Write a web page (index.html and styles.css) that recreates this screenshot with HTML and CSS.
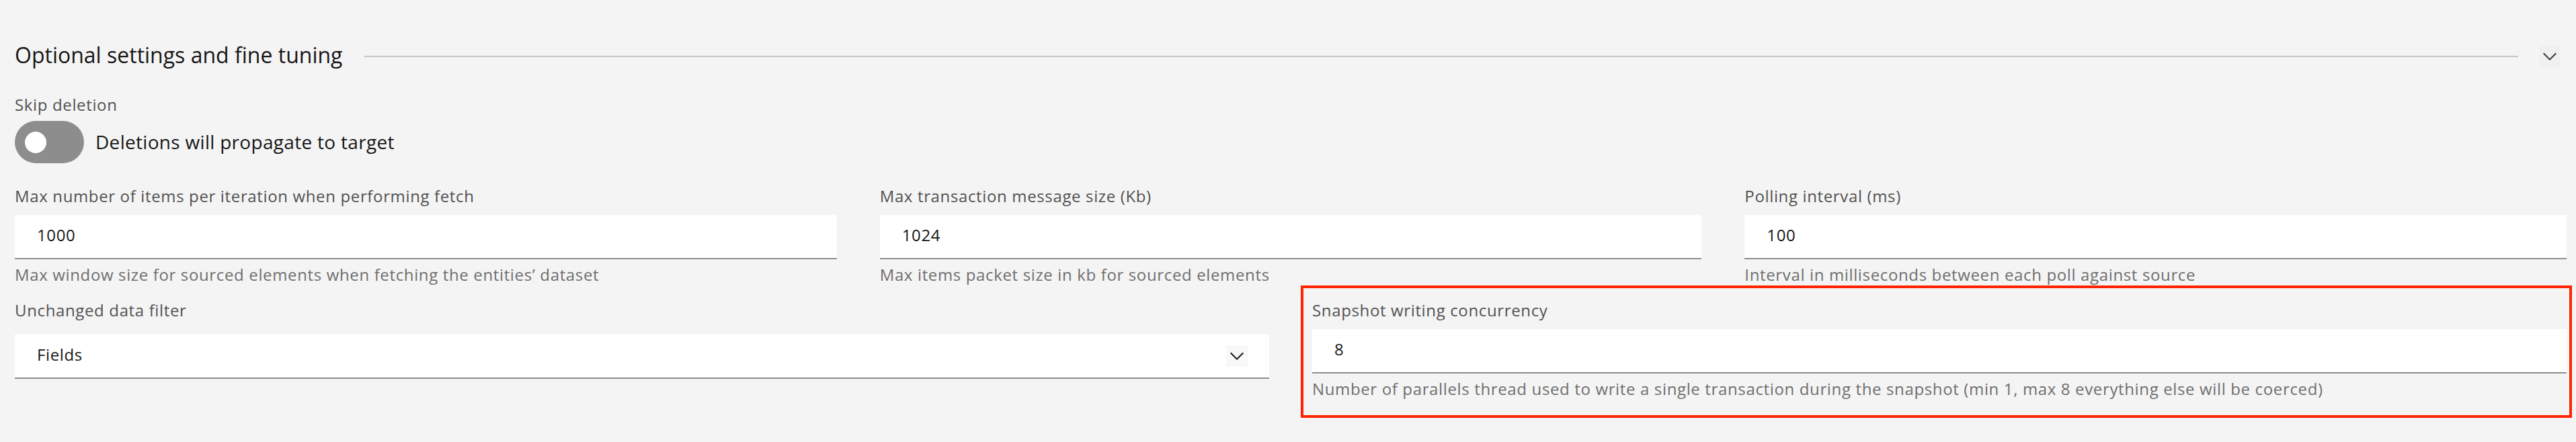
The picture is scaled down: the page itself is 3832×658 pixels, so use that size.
FILE: index.html
```html
<!DOCTYPE html>
<html lang="en">
<head>
<meta charset="utf-8">
<title>Optional settings and fine tuning</title>
<link rel="stylesheet" href="styles.css">
</head>
<body>
<div class="page">
  <div class="section-header">
    <h2 class="section-title">Optional settings and fine tuning</h2>
    <div class="section-rule"></div>
    <button class="icon-btn icon-btn--header" aria-label="Collapse">
      <svg viewBox="0 0 16 16" width="32" height="32"><path d="M8 11L3 6 3.7 5.3 8 9.6 12.3 5.3 13 6z"/></svg>
    </button>
  </div>

  <div class="toggle-field">
    <div class="field-label">Skip deletion</div>
    <div class="toggle-row">
      <span class="toggle"><span class="toggle-knob"></span></span>
      <span class="toggle-text">Deletions will propagate to target</span>
    </div>
  </div>

  <div class="grid grid-3">
    <div class="field">
      <div class="field-label">Max number of items per iteration when performing fetch</div>
      <div class="text-input">1000</div>
      <div class="helper">Max window size for sourced elements when fetching the entities’ dataset</div>
    </div>
    <div class="field">
      <div class="field-label">Max transaction message size (Kb)</div>
      <div class="text-input">1024</div>
      <div class="helper">Max items packet size in kb for sourced elements</div>
    </div>
    <div class="field">
      <div class="field-label">Polling interval (ms)</div>
      <div class="text-input">100</div>
      <div class="helper">Interval in milliseconds between each poll against source</div>
    </div>
  </div>

  <div class="grid grid-2">
    <div class="field">
      <div class="field-label">Unchanged data filter</div>
      <div class="select-input">
        <span class="select-value">Fields</span>
        <span class="icon-btn icon-btn--select">
          <svg viewBox="0 0 16 16" width="32" height="32"><path d="M8 11L3 6 3.7 5.3 8 9.6 12.3 5.3 13 6z"/></svg>
        </span>
      </div>
    </div>
    <div class="field field-highlight">
      <div class="field-label">Snapshot writing concurrency</div>
      <div class="text-input">8</div>
      <div class="helper">Number of parallels thread used to write a single transaction during the snapshot (min 1, max 8 everything else will be coerced)</div>
    </div>
  </div>
</div>
</body>
</html>
```

FILE: styles.css
```css
html, body {
  margin: 0;
  padding: 0;
  background: #f4f4f4;
}

body {
  font-family: "Open Sans", "Noto Sans", sans-serif;
  color: #161616;
}

.page {
  padding: 62px 14px 0 22px;
  min-height: 658px;
  box-sizing: border-box;
}

/* Section header */
.section-header {
  display: flex;
  align-items: center;
  height: 44px;
  margin-right: 9px;
}

.section-title {
  margin: 0;
  align-self: flex-start;
  font-size: 32px;
  font-weight: 400;
  line-height: 40px;
  color: #161616;
  white-space: nowrap;
}

.section-rule {
  flex: 1;
  height: 2px;
  background: #c6c6c6;
  margin: 0 31px 0 33px;
}

.icon-btn {
  width: 32px;
  height: 32px;
  padding: 0;
  border: 0;
  display: flex;
  align-items: center;
  justify-content: center;
  flex: none;
}

.icon-btn svg {
  display: block;
}

.icon-btn--header {
  background: #f0f0f0;
}

.icon-btn--header svg {
  fill: #393939;
}

.icon-btn--select {
  background: #f8f8f8;
}

.icon-btn--select svg {
  fill: #161616;
}

/* Labels & helpers */
.field-label {
  font-size: 24px;
  line-height: 32px;
  letter-spacing: 0.64px;
  color: #525252;
  white-space: nowrap;
  margin-bottom: 12px;
}

.helper {
  margin-top: 7px;
  font-size: 24px;
  line-height: 32px;
  letter-spacing: 0.64px;
  color: #6f6f6f;
  white-space: nowrap;
}

/* Toggle */
.toggle-field {
  margin-top: 34px;
}

.toggle-field .field-label {
  margin-bottom: 8px;
}

.toggle-row {
  display: flex;
  align-items: center;
  gap: 17px;
  height: 63px;
}

.toggle {
  width: 103px;
  height: 63px;
  border-radius: 32px;
  background: #8d8d8d;
  display: flex;
  align-items: center;
  padding-left: 15px;
  box-sizing: border-box;
  flex: none;
}

.toggle-knob {
  width: 32px;
  height: 32px;
  border-radius: 50%;
  background: #ffffff;
}

.toggle-text {
  font-size: 28px;
  line-height: 60px;
  letter-spacing: 0.3px;
  color: #161616;
  margin-bottom: 2px;
}

/* Grid rows */
.grid {
  display: grid;
  column-gap: 64px;
}

.grid-3 {
  grid-template-columns: repeat(3, 1fr);
  margin-top: 33px;
}

.grid-2 {
  grid-template-columns: repeat(2, 1fr);
  margin-top: 21px;
}

.field {
  min-width: 0;
}

/* Inputs */
.text-input {
  height: 60px;
  padding: 0 33px 4px;
  background: #ffffff;
  border-bottom: 2px solid #8d8d8d;
  font-size: 24px;
  line-height: 60px;
  letter-spacing: 0.64px;
  color: #161616;
}

.select-input {
  margin-top: 20px;
  height: 64px;
  padding: 0 32px 0 33px;
  background: #ffffff;
  border-bottom: 2px solid #8d8d8d;
  display: flex;
  align-items: center;
  justify-content: space-between;
}

.select-value {
  font-size: 24px;
  line-height: 60px;
  letter-spacing: 0.64px;
  color: #161616;
  margin-bottom: 4px;
}

/* Highlight frame around the snapshot field */
.field-highlight {
  position: relative;
}

.field-highlight::after {
  content: "";
  position: absolute;
  top: -21px;
  right: -8px;
  bottom: -27px;
  left: -17px;
  border: 4px solid #ff2400;
  pointer-events: none;
}
```
